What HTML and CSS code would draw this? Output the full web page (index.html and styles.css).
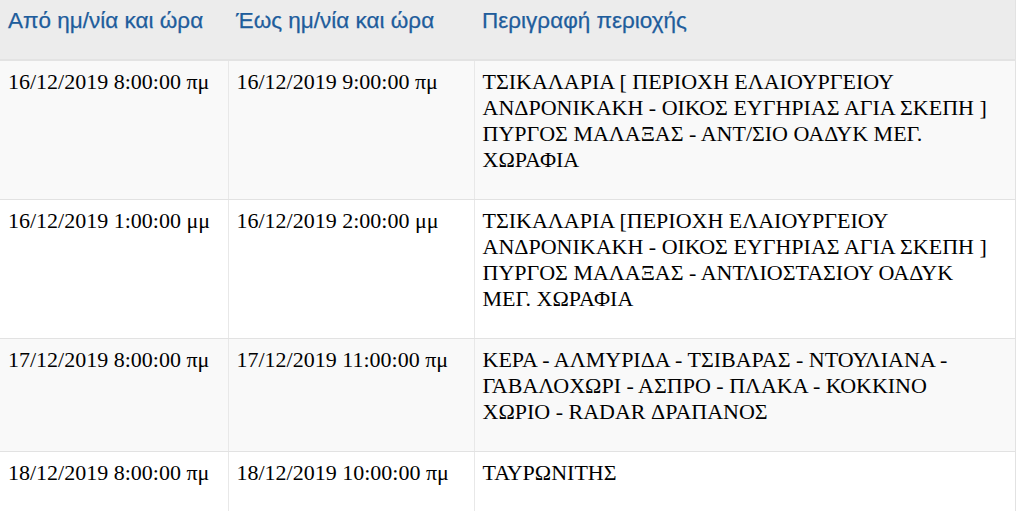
FILE: index.html
```html
<!DOCTYPE html>
<html lang="el">
<head>
<meta charset="utf-8">
<link rel="stylesheet" href="styles.css">
</head>
<body>
<table class="outages">
  <colgroup>
    <col class="c1"><col class="c2"><col class="c3">
  </colgroup>
  <thead>
    <tr>
      <th>Από ημ/νία και ώρα</th>
      <th>Έως ημ/νία και ώρα</th>
      <th>Περιγραφή περιοχής</th>
    </tr>
  </thead>
  <tbody>
    <tr class="odd">
      <td>16/12/2019 8:00:00 πμ</td>
      <td>16/12/2019 9:00:00 πμ</td>
      <td class="desc">ΤΣΙΚΑΛΑΡΙΑ [ ΠΕΡΙΟΧΗ ΕΛΑΙΟΥΡΓΕΙΟΥ ΑΝΔΡΟΝΙΚΑΚΗ - ΟΙΚΟΣ ΕΥΓΗΡΙΑΣ ΑΓΙΑ ΣΚΕΠΗ ] ΠΥΡΓΟΣ ΜΑΛΑΞΑΣ - ΑΝΤ/ΣΙΟ ΟΑΔΥΚ ΜΕΓ. ΧΩΡΑΦΙΑ</td>
    </tr>
    <tr>
      <td>16/12/2019 1:00:00 μμ</td>
      <td>16/12/2019 2:00:00 μμ</td>
      <td class="desc">ΤΣΙΚΑΛΑΡΙΑ [ΠΕΡΙΟΧΗ ΕΛΑΙΟΥΡΓΕΙΟΥ ΑΝΔΡΟΝΙΚΑΚΗ - ΟΙΚΟΣ ΕΥΓΗΡΙΑΣ ΑΓΙΑ ΣΚΕΠΗ ] ΠΥΡΓΟΣ ΜΑΛΑΞΑΣ - ΑΝΤΛΙΟΣΤΑΣΙΟΥ ΟΑΔΥΚ ΜΕΓ. ΧΩΡΑΦΙΑ</td>
    </tr>
    <tr class="odd">
      <td>17/12/2019 8:00:00 πμ</td>
      <td>17/12/2019 11:00:00 πμ</td>
      <td class="desc">ΚΕΡΑ - ΑΛΜΥΡΙΔΑ - ΤΣΙΒΑΡΑΣ - ΝΤΟΥΛΙΑΝΑ - ΓΑΒΑΛΟΧΩΡΙ - ΑΣΠΡΟ - ΠΛΑΚΑ - ΚΟΚΚΙΝΟ ΧΩΡΙΟ - RADAR ΔΡΑΠΑΝΟΣ</td>
    </tr>
    <tr>
      <td>18/12/2019 8:00:00 πμ</td>
      <td>18/12/2019 10:00:00 πμ</td>
      <td class="desc">ΤΑΥΡΩΝΙΤΗΣ</td>
    </tr>
  </tbody>
</table>
</body>
</html>
```
FILE: styles.css
```css
html, body {
  margin: 0;
  padding: 0;
  background: #ffffff;
}

.outages {
  border-collapse: collapse;
  table-layout: fixed;
  width: 1015px;
  border-right: 1px solid #e2e2e2;
}

.c1 { width: 228px; }
.c2 { width: 246px; }
.c3 { width: 541px; }

.outages th {
  background: #ececec;
  color: #1e5d9c;
  font-family: "Liberation Sans", Arial, sans-serif;
  font-weight: normal;
  font-size: 22.5px;
  -webkit-text-stroke: 0.25px #1e5d9c;
  text-align: left;
  vertical-align: top;
  height: 60px;
  box-sizing: border-box;
  padding: 8px 8px 0 8px;
  border-bottom: 2px solid #e3e3e3;
  line-height: 26px;
  white-space: nowrap;
}

.outages td {
  font-family: "Liberation Serif", "Times New Roman", serif;
  font-size: 22px;
  line-height: 26px;
  color: #000;
  vertical-align: top;
  padding: 8px 8px 26px 8px;
  border-bottom: 1px solid #e2e2e2;
  border-left: 1px solid #e8e8e8;
}

.outages td.desc {
  padding-right: 22px;
}

.outages td:first-child {
  border-left: none;
}

.outages tr.odd td {
  background: #f9f9f9;
}
```
